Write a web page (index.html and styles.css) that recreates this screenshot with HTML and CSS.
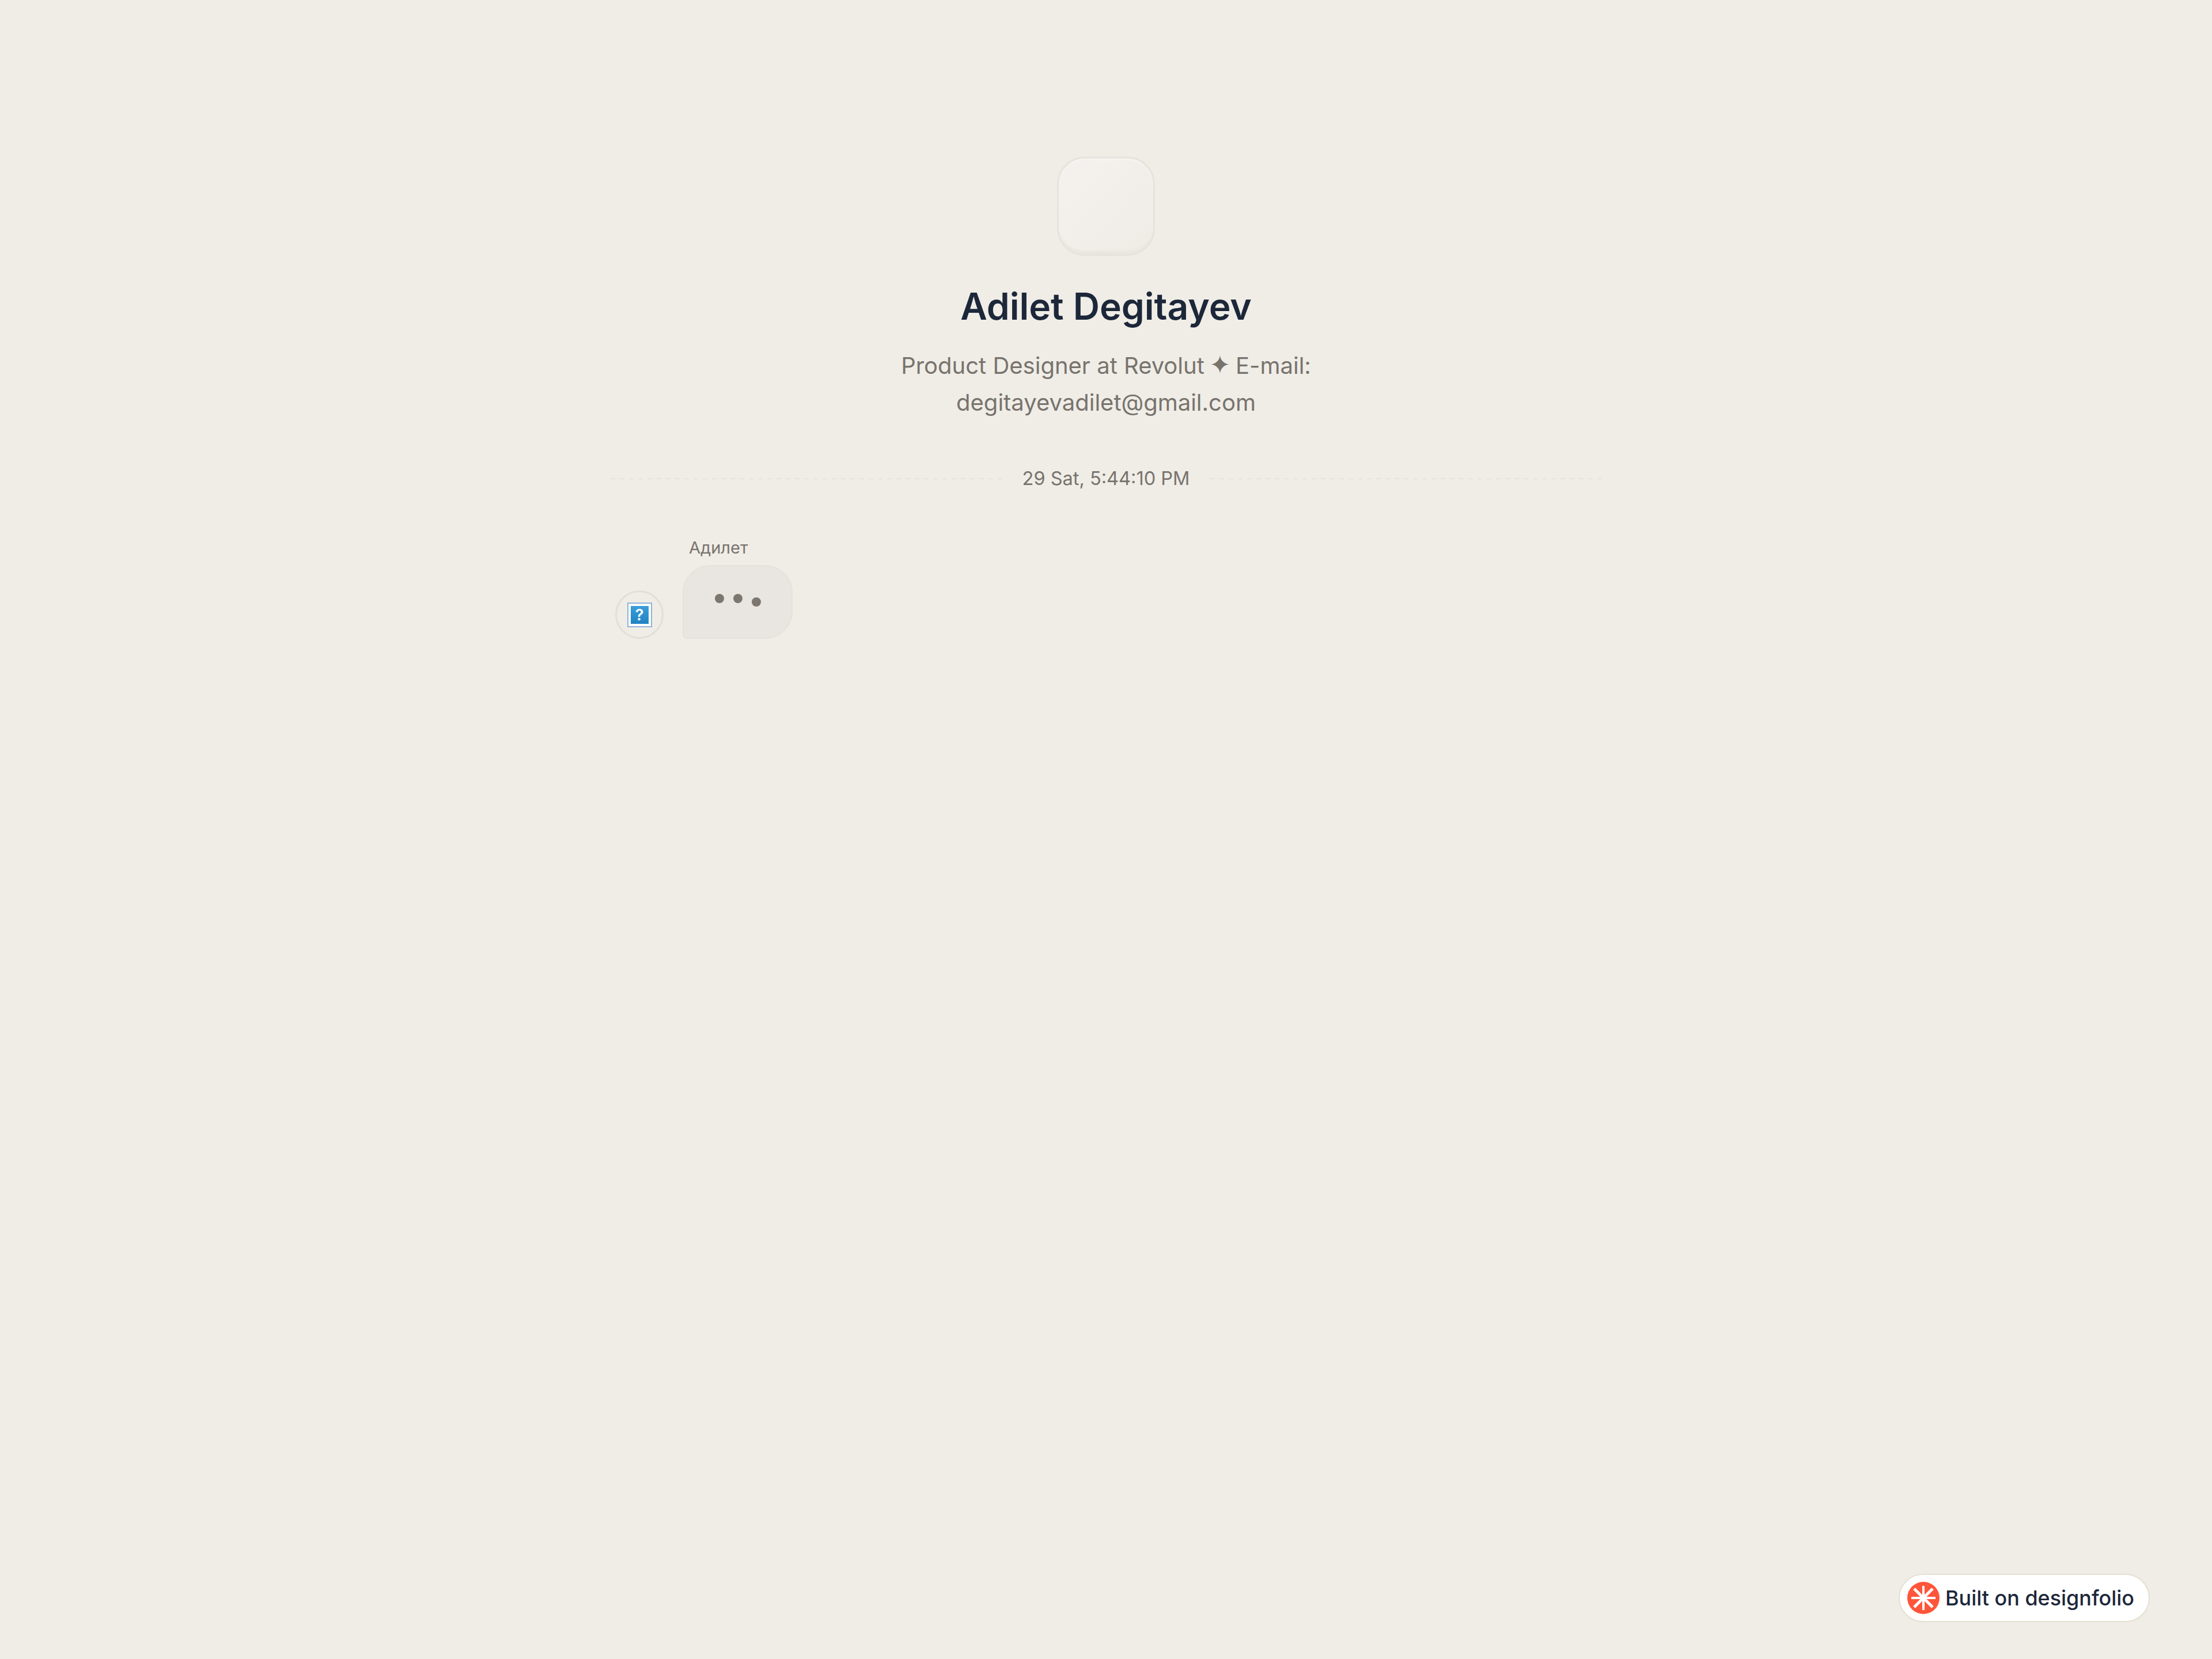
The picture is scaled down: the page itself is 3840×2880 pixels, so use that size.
FILE: index.html
```html
<!DOCTYPE html>
<html lang="en">
  <head>
    <meta charset="UTF-8" />
    <meta name="viewport" content="width=device-width, initial-scale=1.0" />
    <title>Adilet Degitayev</title>
    <link rel="stylesheet" href="styles.css">
  </head>
  <body>
    <div class="container">
      <div class="profile">
        <div class="profile-photo"></div>
        <h1>Adilet Degitayev</h1>
        <p>Product Designer at Revolut <span class="sparkle">✦</span> E-mail:<br />degitayevadilet@gmail.com</p>
      </div>

      <div class="time-divider">
        <span class="dash-line"></span>
        <span class="time">29 Sat, 5:44:10 PM</span>
        <span class="dash-line"></span>
      </div>

      <div class="message-row">
        <div class="sender-photo">
          <div class="missing-image"><span>?</span></div>
        </div>
        <div class="message-body">
          <div class="sender-name">Адилет</div>
          <div class="typing-bubble">
            <span class="dot"></span>
            <span class="dot"></span>
            <span class="dot dot-low"></span>
          </div>
        </div>
      </div>
    </div>

    <a class="built-on" href="#">
      <svg class="built-on-logo" viewBox="0 0 56 56" aria-hidden="true">
        <circle cx="28" cy="28" r="28" fill="#ff553a" />
        <path d="M28 7V49M7 28H49" stroke="#fff" stroke-width="4" fill="none" />
        <path d="M12 12L44 44M44 12L12 44" stroke="#fff" stroke-width="5" fill="none" />
      </svg>
      <span>Built on designfolio</span>
    </a>
  </body>
</html>
```

FILE: styles.css
```css
body {
  font-family: Inter, "Noto Sans", sans-serif;
  margin: 0;
  padding: 0;
  background-color: #f0ede7;
  min-height: 2880px;
}
.container {
  width: 1720px;
  margin: 0 auto;
  padding-top: 272px;
}
.profile {
  display: flex;
  flex-direction: column;
  align-items: center;
  text-align: center;
}
.profile-photo {
  width: 170px;
  height: 172px;
  box-sizing: border-box;
  border: 3px solid #e6e3dc;
  border-radius: 48px;
  background: linear-gradient(135deg, #f4f2ee, #efece6);
  box-shadow: inset 0 -8px 4px -3px #e9e6e0, inset 0 4px 3px -1px #f5f4f0;
}
.profile h1 {
  margin: 50px 0 0;
  font-size: 64px;
  line-height: 76px;
  font-weight: 600;
  color: #1c2739;
}
.profile p {
  margin: 32px 0 0;
  font-size: 40px;
  line-height: 64px;
  color: #78736d;
}
.sparkle {
  margin: 0 -3px;
  font-family: "DejaVu Sans", sans-serif;
  font-size: 45px;
}
.time-divider {
  display: flex;
  align-items: center;
  margin-top: 78px;
}
.dash-line {
  flex: 1;
  height: 2px;
  background: repeating-linear-gradient(90deg, #e6e3dc 0, #e6e3dc 8px, transparent 8px, transparent 16px);
}
.time {
  padding: 0 36px;
  font-size: 32.5px;
  line-height: 44px;
  color: #78736d;
}
.message-row {
  display: flex;
  align-items: flex-end;
  gap: 33px;
  margin-top: 80px;
  padding-left: 8px;
}
.sender-photo {
  width: 84px;
  height: 84px;
  box-sizing: border-box;
  display: flex;
  align-items: center;
  justify-content: center;
  border: 3px solid #e2dfd8;
  border-radius: 50%;
}
.missing-image {
  width: 43px;
  height: 43px;
  box-sizing: border-box;
  display: flex;
  padding: 4px;
  border: 2px solid #8fb4da;
  background-color: #fff;
}
.missing-image span {
  flex: 1;
  background: linear-gradient(#3a9fdc, #1f82c2);
  color: #fff;
  font-size: 27px;
  font-weight: 600;
  line-height: 31px;
  text-align: center;
}
.sender-name {
  margin: 0 0 12px 11px;
  font-size: 29px;
  line-height: 36px;
  color: #78736d;
}
.typing-bubble {
  width: 191px;
  height: 128px;
  box-sizing: border-box;
  display: flex;
  gap: 16px;
  justify-content: center;
  padding-top: 48px;
  border: 2px solid #e5e2dc;
  border-radius: 48px 48px 48px 8px;
  background-color: #e9e6e1;
}
.dot {
  width: 16px;
  height: 16px;
  border-radius: 50%;
  background-color: #7d766e;
}
.dot-low {
  margin-top: 6px;
}
.built-on {
  position: fixed;
  right: 108px;
  bottom: 64px;
  display: flex;
  align-items: center;
  gap: 10px;
  height: 84px;
  box-sizing: border-box;
  padding: 0 25px 0 13px;
  border: 2px solid #e6dfd0;
  border-radius: 42px;
  background-color: #fff;
  color: #1c2739;
  font-size: 35.9px;
  font-weight: 450;
  text-decoration: none;
}
.built-on-logo {
  width: 56px;
  height: 56px;
}
```
